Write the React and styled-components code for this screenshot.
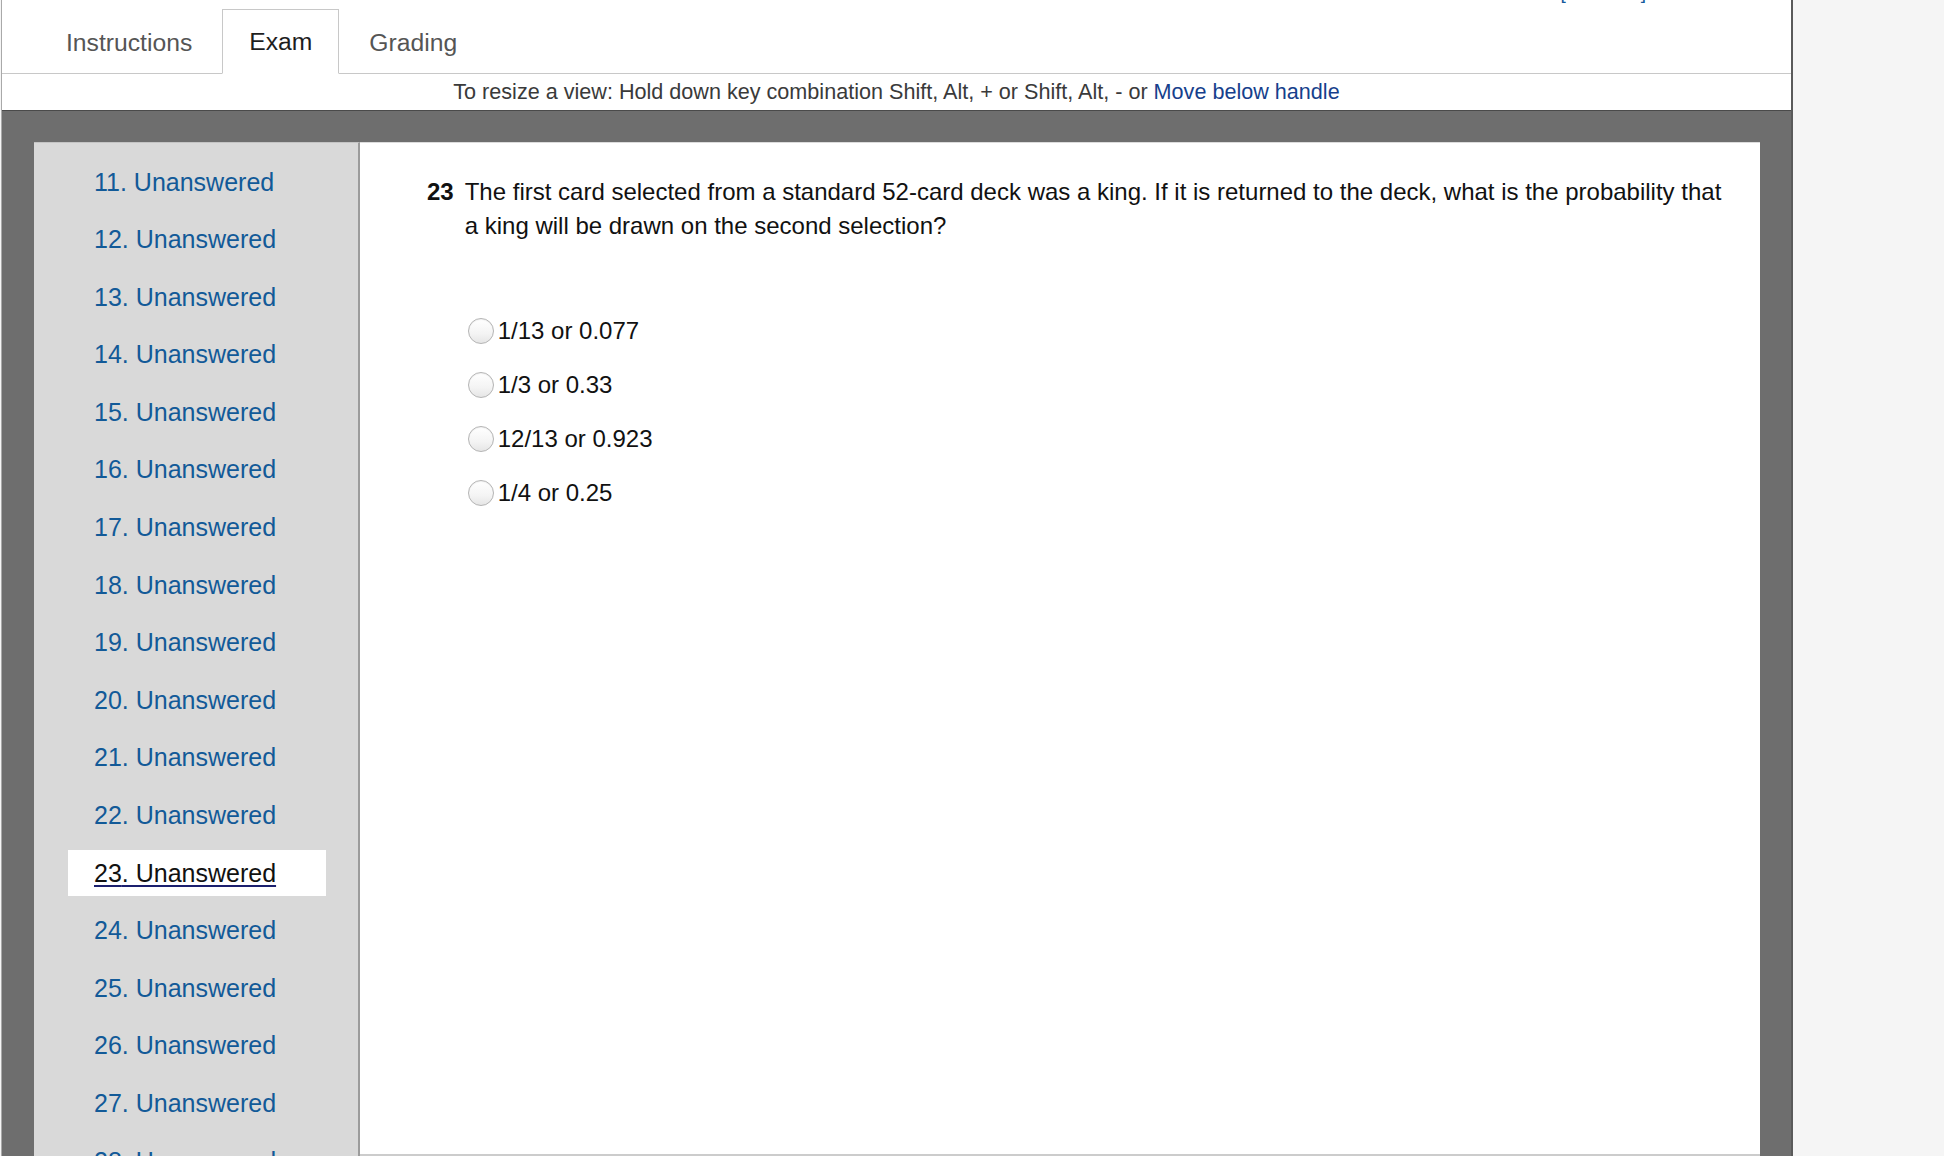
import React from "react";
import styled, { createGlobalStyle } from "styled-components";

const questionNumbers = Array.from({ length: 20 }, (_, i) => i + 11);
const CURRENT = 23;
const choices = ["1/13 or 0.077", "1/3 or 0.33", "12/13 or 0.923", "1/4 or 0.25"];
const tabs = ["Instructions", "Exam", "Grading"];

const GlobalStyle = createGlobalStyle`
  html, body {
    margin: 0;
    padding: 0;
    background: #f5f5f5;
    font-family: "Liberation Sans", Arial, Helvetica, sans-serif;
  }
`;

const App = () => {
  return (
    <>
      <GlobalStyle />
      <Frame>
        <TabBar>
          {tabs.map((t) => (
            <Tab key={t} $active={t === "Exam"}>
              {t}
            </Tab>
          ))}
          <TopLink href="#">[Minimize]</TopLink>
        </TabBar>
        <ResizeBar>
          To resize a view: Hold down key combination Shift, Alt, + or Shift, Alt, - or{" "}
          <HandleLink href="#">Move below handle</HandleLink>
        </ResizeBar>

        <Workspace>
          <Sidebar>
            {questionNumbers.map((n) => (
              <NavItem key={n} $active={n === CURRENT}>
                <NavLink href="#" $active={n === CURRENT}>
                  {n}. Unanswered
                </NavLink>
              </NavItem>
            ))}
          </Sidebar>

          <Content>
            <QuestionRow>
              <QuestionNumber>23</QuestionNumber>
              <QuestionBody>
                <QuestionText>
                  The first card selected from a standard 52-card deck was a king. If it is
                  returned to the deck, what is the probability that a king will be drawn on
                  the second selection?
                </QuestionText>
                <Choices>
                  {choices.map((c) => (
                    <Choice key={c}>
                      <Radio type="radio" name="q23" />
                      {c}
                    </Choice>
                  ))}
                </Choices>
              </QuestionBody>
            </QuestionRow>
          </Content>
        </Workspace>
      </Frame>
    </>
  );
};

const Frame = styled.div`
  height: 100vh;
  width: 1789px;
  margin-left: 1px;
  display: flex;
  flex-direction: column;
  background: #ffffff;
  border-left: 1px solid #a9a9a9;
  border-right: 2px solid #5a5a5a;
  overflow: hidden;
`;

const TabBar = styled.div`
  height: 73px;
  flex-shrink: 0;
  display: flex;
  align-items: flex-end;
  gap: 3px;
  padding-left: 37px;
  border-bottom: 1px solid #c8c8c8;
  background: #ffffff;
`;

const Tab = styled.div`
  height: 63px;
  margin-bottom: -1px;
  padding: 0 26px;
  display: flex;
  align-items: center;
  font-size: 24.7px;
  color: ${(p) => (p.$active ? "#1e1e1e" : "#555555")};
  background: ${(p) => (p.$active ? "#ffffff" : "transparent")};
  border: 1px solid ${(p) => (p.$active ? "#c8c8c8" : "transparent")};
  border-bottom: ${(p) => (p.$active ? "1px solid #ffffff" : "none")};
  cursor: pointer;
`;

const TopLink = styled.a`
  align-self: flex-start;
  margin-left: auto;
  margin-right: 145px;
  margin-top: -17px;
  font-size: 19px;
  line-height: 19px;
  color: #15599b;
  text-decoration: none;
`;

const ResizeBar = styled.div`
  height: 36px;
  flex-shrink: 0;
  border-bottom: 1px solid #4a4a4a;
  text-align: center;
  font-size: 21.6px;
  line-height: 36px;
  color: #3a3a3a;
  background: #ffffff;
`;

const HandleLink = styled.a`
  color: #163f8c;
  text-decoration: none;
`;

const Workspace = styled.div`
  flex: 1;
  min-height: 0;
  display: flex;
  padding: 31px 31px 0 32px;
  background: #6e6e6e;
`;

const Sidebar = styled.div`
  width: 324px;
  flex-shrink: 0;
  padding-top: 16px;
  background: #d9d9d9;
  border-top: 1px solid #c4c4c4;
  border-right: 2px solid #9c9c9c;
  overflow: hidden;
`;

const NavItem = styled.div`
  height: 46px;
  margin: 0 32px 11.6px 34px;
  padding-left: 26px;
  display: flex;
  align-items: center;
  background: ${(p) => (p.$active ? "#ffffff" : "transparent")};
`;

const NavLink = styled.a`
  font-size: 25px;
  color: ${(p) => (p.$active ? "#111111" : "#125a98")};
  text-decoration: ${(p) => (p.$active ? "underline" : "none")};
  text-decoration-color: #1b1f6e;
  text-underline-offset: 3px;
  white-space: nowrap;
`;

const Content = styled.div`
  flex: 1;
  background: #ffffff;
  border-top: 1px solid #dcdcdc;
  border-bottom: 2px solid #cccccc;
  padding: 32px 32px 0 67px;
  color: #111111;
`;

const QuestionRow = styled.div`
  display: flex;
  align-items: flex-start;
  font-size: 24px;
  line-height: 34px;
`;

const QuestionNumber = styled.span`
  font-weight: bold;
  margin-right: 11px;
`;

const QuestionBody = styled.div`
  flex: 1;
`;

const QuestionText = styled.p`
  margin: 0;
`;

const Choices = styled.div`
  margin-top: 61px;
  display: flex;
  flex-direction: column;
`;

const Choice = styled.label`
  height: 54px;
  display: flex;
  align-items: center;
  font-size: 24px;
  cursor: pointer;
`;

const Radio = styled.input`
  appearance: none;
  width: 26px;
  height: 26px;
  margin: 0 4px 0 3px;
  border-radius: 50%;
  border: 1px solid #b4b4b4;
  background: linear-gradient(180deg, #ffffff 0%, #f4f4f4 60%, #e6e6e6 100%);
  box-shadow: inset 0 1px 1px rgba(0, 0, 0, 0.06);
  flex-shrink: 0;
`;

export default App;
